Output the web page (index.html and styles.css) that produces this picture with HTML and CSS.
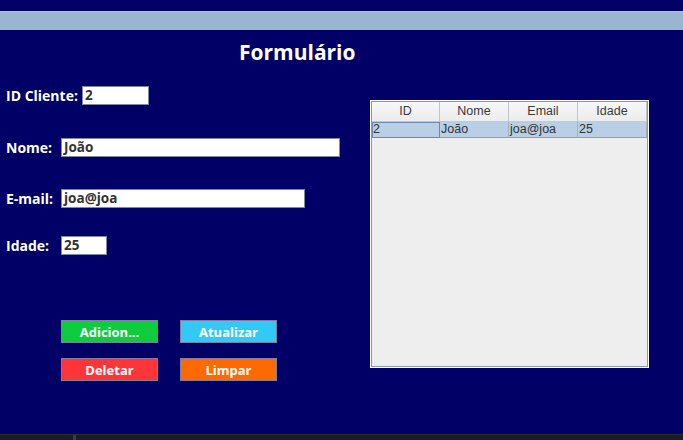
FILE: index.html
```html
<!DOCTYPE html>
<html lang="pt">
<head>
<meta charset="utf-8">
<title>Formulário</title>
<link rel="stylesheet" href="styles.css">
</head>
<body>
<div class="window">
  <div class="topgap"></div>
  <div class="titlebar"></div>
  <div class="main">
    <div class="form">
      <h1 class="title">Formulário</h1>
      <div class="row row-id">
        <label class="lbl lbl-id">ID Cliente:</label>
        <div class="field f-id">2</div>
      </div>
      <div class="row row-nome">
        <label class="lbl">Nome:</label>
        <div class="field f-nome">João</div>
      </div>
      <div class="row row-email">
        <label class="lbl">E-mail:</label>
        <div class="field f-email">joa@joa</div>
      </div>
      <div class="row row-idade">
        <label class="lbl">Idade:</label>
        <div class="field f-idade">25</div>
      </div>
      <div class="buttons">
        <button class="btn green">Adicion...</button>
        <button class="btn cyan">Atualizar</button>
        <button class="btn red">Deletar</button>
        <button class="btn orange">Limpar</button>
      </div>
    </div>
    <div class="tablewrap">
      <div class="table">
        <div class="thead">
          <div class="th">ID</div>
          <div class="th">Nome</div>
          <div class="th">Email</div>
          <div class="th">Idade</div>
        </div>
        <div class="tr">
          <div class="td focus">2</div>
          <div class="td">João</div>
          <div class="td">joa@joa</div>
          <div class="td">25</div>
        </div>
      </div>
    </div>
  </div>
  <div class="footer"><span class="mark"></span></div>
</div>
</body>
</html>
```
FILE: styles.css
```css
* { box-sizing: border-box; }
html, body { margin: 0; padding: 0; }
body {
  background: #000066;
  width: 683px;
  height: 440px;
  overflow: hidden;
  font-family: "Open Sans", "DejaVu Sans", sans-serif;
}
.window {
  display: flex;
  flex-direction: column;
  height: 440px;
}
.topgap { height: 11px; }
.titlebar {
  height: 19px;
  background: #9bb4d0;
  border-top: 1px solid #aec3dc;
}
.main {
  flex: 1;
  display: flex;
}
.form {
  width: 371px;
  padding-left: 6px;
  display: flex;
  flex-direction: column;
}
.title {
  margin: 8px 0 0 233px;
  font-size: 21px;
  line-height: 29px;
  font-weight: 700;
  color: #ffffff;
}
.row {
  display: flex;
  align-items: center;
  height: 19px;
}
.row-id { margin-top: 19px; }
.row-nome { margin-top: 33px; }
.row-email { margin-top: 32px; }
.row-idade { margin-top: 28px; }
.lbl {
  color: #fff;
  font-weight: 700;
  font-size: 14px;
  width: 55px;
  white-space: nowrap;
}
.lbl-id { width: 76px; }
.field {
  height: 19px;
  background: #fff;
  border: 1px solid #7d8aa6;
  color: #333;
  font-weight: 700;
  font-size: 13.5px;
  line-height: 17px;
  padding-left: 2px;
}
.f-id { width: 67px; }
.f-nome { width: 279px; }
.f-email { width: 244px; }
.f-idade { width: 46px; }
.buttons {
  margin: 65px 0 0 55px;
  display: grid;
  grid-template-columns: 97px 97px;
  column-gap: 22px;
  row-gap: 15px;
}
.btn {
  height: 23px;
  border: 1px solid #7f7fa5;
  color: #fff;
  font-family: inherit;
  font-weight: 700;
  font-size: 13px;
  padding: 0;
  line-height: 20px;
}
.green { background: #0fcc3e; }
.cyan { background: #33c9f7; }
.red { background: #fd3438; }
.orange { background: #ff6a00; }
.tablewrap {
  padding-top: 71px;
}
.table {
  width: 277px;
  height: 266px;
  background: #eeeeee;
  border: 1px solid #8a97ad;
  box-shadow: 0 0 0 1px #ffffff;
  font-family: "Liberation Sans", Arial, sans-serif;
  font-size: 12.5px;
  color: #333;
}
.thead, .tr {
  display: grid;
  grid-template-columns: 68px 69px 69px 69px;
}
.thead { height: 20px; border-bottom: 1px solid #c4c8cf; }
.th {
  text-align: center;
  line-height: 19px;
  background: linear-gradient(#f7f7f7, #ececec);
  border-right: 1px solid #c0c4cc;
  color: #3a3a3a;
}
.tr { height: 16px; background: #b8cfe5; }
.td {
  line-height: 15px;
  padding-left: 1px;
  color: #333;
  border-bottom: 1px solid #8aa0bd;
  border-right: 1px solid #9fb2ca;
}
.td.focus { border: 1px solid #6f86b0; padding-left: 0; line-height: 13px; }
.footer {
  height: 6px;
  background: #1b1d20;
  border-top: 1px solid #2a2d33;
  position: relative;
}
.mark {
  position: absolute;
  left: 73px;
  top: 0;
  width: 3px;
  height: 6px;
  background: #3a3d42;
}
```
